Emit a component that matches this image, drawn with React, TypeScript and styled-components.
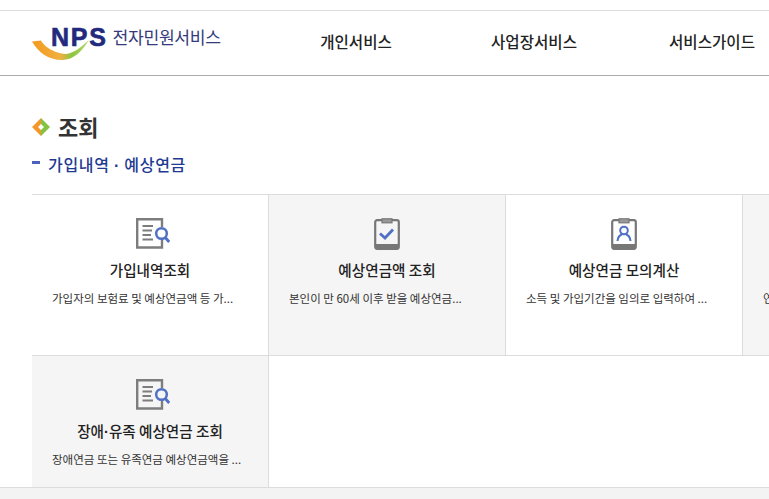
import React from "react";
import styled, { createGlobalStyle } from "styled-components";

const GlobalStyle = createGlobalStyle`
  html, body {
    margin: 0;
    padding: 0;
    height: 100%;
    overflow: hidden;
    background: #fff;
    font-family: "Noto Sans CJK KR", "Noto Sans", sans-serif;
  }
  * { box-sizing: border-box; }
`;

const Dot = styled.span`
  font-family: "Liberation Sans", Arial, sans-serif;
  font-weight: 700;
`;

type CardData = {
  title: React.ReactNode;
  desc: string;
  icon: "search" | "check" | "person";
  gray?: boolean;
};

const row1: CardData[] = [
  { title: "가입내역조회", desc: "가입자의 보험료 및 예상연금액 등 가...", icon: "search" },
  { title: "예상연금액 조회", desc: "본인이 만 60세 이후 받을 예상연금...", icon: "check", gray: true },
  { title: "예상연금 모의계산", desc: "소득 및 가입기간을 임의로 입력하여 ...", icon: "person" },
  { title: "", desc: "연금보험료 납부내역을 조회하실 수...", icon: "search", gray: true },
];

const row2: CardData[] = [
  {
    title: (
      <>
        장애<Dot>·</Dot>유족 예상연금 조회
      </>
    ),
    desc: "장애연금 또는 유족연금 예상연금액을 ...",
    icon: "search",
    gray: true,
  },
];

const DocSearchIcon = () => (
  <SearchSvg width="34" height="32" viewBox="0 0 34 32" fill="none">
    <path d="M26 9V1.2H1.2V29.5H26V21" stroke="#7d7d7d" strokeWidth="2.4" />
    <path d="M6.5 8H17M6.5 12.5H16M6.5 17H15M6.5 21.5H17" stroke="#7d7d7d" strokeWidth="2.2" />
    <circle cx="25.5" cy="15.5" r="5.3" stroke="#5070c4" strokeWidth="2.5" fill="none" />
    <path d="M29.5 19.8L33.2 24" stroke="#5070c4" strokeWidth="2.8" />
  </SearchSvg>
);

const Clipboard = ({ children }: { children: React.ReactNode }) => (
  <svg width="26" height="32" viewBox="0 0 26 32" fill="none">
    <rect x="1.2" y="2.2" width="23.6" height="28.6" rx="2" stroke="#777" strokeWidth="2.2" />
    <path d="M1.5 28H24.5" stroke="#777" strokeWidth="4" />
    <rect x="8" y="0.8" width="10" height="4" fill="#999" stroke="#777" strokeWidth="1.2" />
    {children}
  </svg>
);

const CardIcon = ({ name }: { name: CardData["icon"] }) => {
  if (name === "search") return <DocSearchIcon />;
  if (name === "check")
    return (
      <Clipboard>
        <path d="M6 15.5L11 20L19 11.5" stroke="#5070c4" strokeWidth="2.8" />
      </Clipboard>
    );
  return (
    <Clipboard>
      <circle cx="13" cy="12.5" r="3.8" stroke="#5070c4" strokeWidth="2" />
      <path d="M6.5 23C6.8 19 9 17 11 16.2M19.5 23C19.2 19 17 17 15 16.2" stroke="#5070c4" strokeWidth="2" />
    </Clipboard>
  );
};

const App = () => (
  <Page>
    <GlobalStyle />
    <Header>
      <Logo>
        <Swoosh width="58" height="22" viewBox="0 0 58 22">
          <defs>
            <linearGradient id="sw" x1="0" x2="1" y1="0" y2="0">
              <stop offset="0" stopColor="#f39a1e" />
              <stop offset="0.5" stopColor="#f0b040" />
              <stop offset="0.7" stopColor="#8cc63f" />
              <stop offset="1" stopColor="#b5d56a" />
            </linearGradient>
          </defs>
          <path d="M0 2.5L9 1.5C15 12 30 15 34 15C42 14 48 9 57 1C50 12 42 21 30 21C16 21 6 13 0 2.5Z" fill="url(#sw)" />
        </Swoosh>
        <LogoMark>NPS</LogoMark>
        <LogoText>전자민원서비스</LogoText>
      </Logo>
      <Nav>
        <NavItem>개인서비스</NavItem>
        <NavItem>사업장서비스</NavItem>
        <NavItem>서비스가이드</NavItem>
      </Nav>
    </Header>
    <Content>
      <TitleRow>
        <Diamond>
          <svg width="18" height="18" viewBox="0 0 18 18">
            <path d="M9 0L0 9L9 18L9 12L6 9L9 6Z" fill="#f4962a" />
            <path d="M9 0L18 9L9 18L9 12L12 9L9 6Z" fill="#84c341" />
          </svg>
        </Diamond>
        <Title>조회</Title>
      </TitleRow>
      <SubRow>
        <Dash />
        <SubTitle>
          가입내역 <Dot>·</Dot> 예상연금
        </SubTitle>
      </SubRow>
      <Grid>
        <CardRow>
          {row1.map((c, i) => (
            <Card key={i} $gray={c.gray} $height={160}>
              <IconBox>
                <CardIcon name={c.icon} />
              </IconBox>
              <CardTitle>{c.title}</CardTitle>
              <CardDesc>{c.desc}</CardDesc>
            </Card>
          ))}
        </CardRow>
        <CardRow>
          {row2.map((c, i) => (
            <Card key={i} $gray={c.gray} $height={131}>
              <IconBox>
                <CardIcon name={c.icon} />
              </IconBox>
              <CardTitle>{c.title}</CardTitle>
              <CardDesc>{c.desc}</CardDesc>
            </Card>
          ))}
        </CardRow>
      </Grid>
    </Content>
    <Footer />
  </Page>
);

export default App;

const Page = styled.div`
  width: 769px;
  height: 499px;
  overflow: hidden;
  display: flex;
  flex-direction: column;
  background: #fff;
  padding-top: 10px;
`;
const Header = styled.header`
  height: 66px;
  flex: none;
  display: flex;
  align-items: center;
  border-top: 1px solid #dcdcdc;
  border-bottom: 1px solid #ababab;
  padding-left: 32px;
`;
const Logo = styled.div`
  position: relative;
  width: 233px;
  flex: none;
  display: flex;
  align-items: center;
  padding-left: 19px;
  height: 40px;
  margin-top: -12px;
`;
const Swoosh = styled.svg`
  position: absolute;
  left: 0;
  top: 22px;
`;
const LogoMark = styled.span`
  font-family: "Liberation Sans", Arial, sans-serif;
  font-weight: 700;
  font-size: 25px;
  letter-spacing: 1.7px;
  color: #232a7e;
  -webkit-text-stroke: 0.6px #232a7e;
`;
const LogoText = styled.span`
  margin-left: 5px;
  font-size: 17.2px;
  letter-spacing: -0.35px;
  color: #343a7c;
  line-height: 24px;
  margin-top: -1px;
`;
const Nav = styled.nav`
  display: flex;
  margin-left: 2px;
  flex: none;
`;
const NavItem = styled.div`
  width: 178px;
  text-align: center;
  font-size: 15.6px;
  font-weight: 500;
  color: #222;
  margin-top: -5px;
  white-space: nowrap;
`;
const Content = styled.main`
  flex: 1;
  min-height: 0;
  padding: 35px 0 0 32px;
  overflow: hidden;
`;
const TitleRow = styled.div`
  display: flex;
  align-items: center;
  gap: 8px;
  height: 30px;
`;
const Diamond = styled.span`
  display: flex;
  width: 18px;
  height: 18px;
  margin-top: 2px;
`;
const Title = styled.h2`
  margin: 0;
  font-size: 22px;
  font-weight: 700;
  color: #333;
  line-height: 30px;
`;
const SubRow = styled.div`
  display: flex;
  align-items: center;
  gap: 8px;
  margin-top: 11px;
  height: 24px;
`;
const Dash = styled.span`
  width: 8px;
  height: 3px;
  background: #4a62bb;
  margin-top: -4px;
`;
const SubTitle = styled.h3`
  margin: 0;
  font-size: 16px;
  font-weight: 500;
  color: #1f3a93;
  letter-spacing: 0.7px;
  white-space: nowrap;
`;
const Grid = styled.div`
  margin-top: 18px;
  border-top: 1px solid #dcdcdc;
  width: 960px;
`;
const CardRow = styled.div`
  display: flex;
  & + & {
    border-top: 1px solid #dcdcdc;
  }
`;
const Card = styled.div<{ $gray?: boolean; $height: number }>`
  width: 237px;
  height: ${(p) => p.$height}px;
  flex: none;
  display: flex;
  flex-direction: column;
  align-items: center;
  padding-top: 23px;
  border-right: 1px solid #dcdcdc;
  background: ${(p) => (p.$gray ? "#f5f5f5" : "#fff")};
  overflow: hidden;
`;
const IconBox = styled.div`
  height: 32px;
  display: flex;
  align-items: center;
  justify-content: center;
`;
const SearchSvg = styled.svg`
  margin-left: 6px;
`;
const CardTitle = styled.div`
  margin-top: 9px;
  height: 22px;
  line-height: 22px;
  font-size: 14.6px;
  font-weight: 500;
  color: #222;
  white-space: nowrap;
`;
const CardDesc = styled.div`
  margin-top: 8px;
  width: 100%;
  padding: 0 20px;
  font-size: 11.5px;
  line-height: 18px;
  color: #333;
  white-space: nowrap;
  overflow: hidden;
`;
const Footer = styled.footer`
  height: 12px;
  flex: none;
  background: #f3f3f3;
  border-top: 1px solid #dcdcdc;
`;
